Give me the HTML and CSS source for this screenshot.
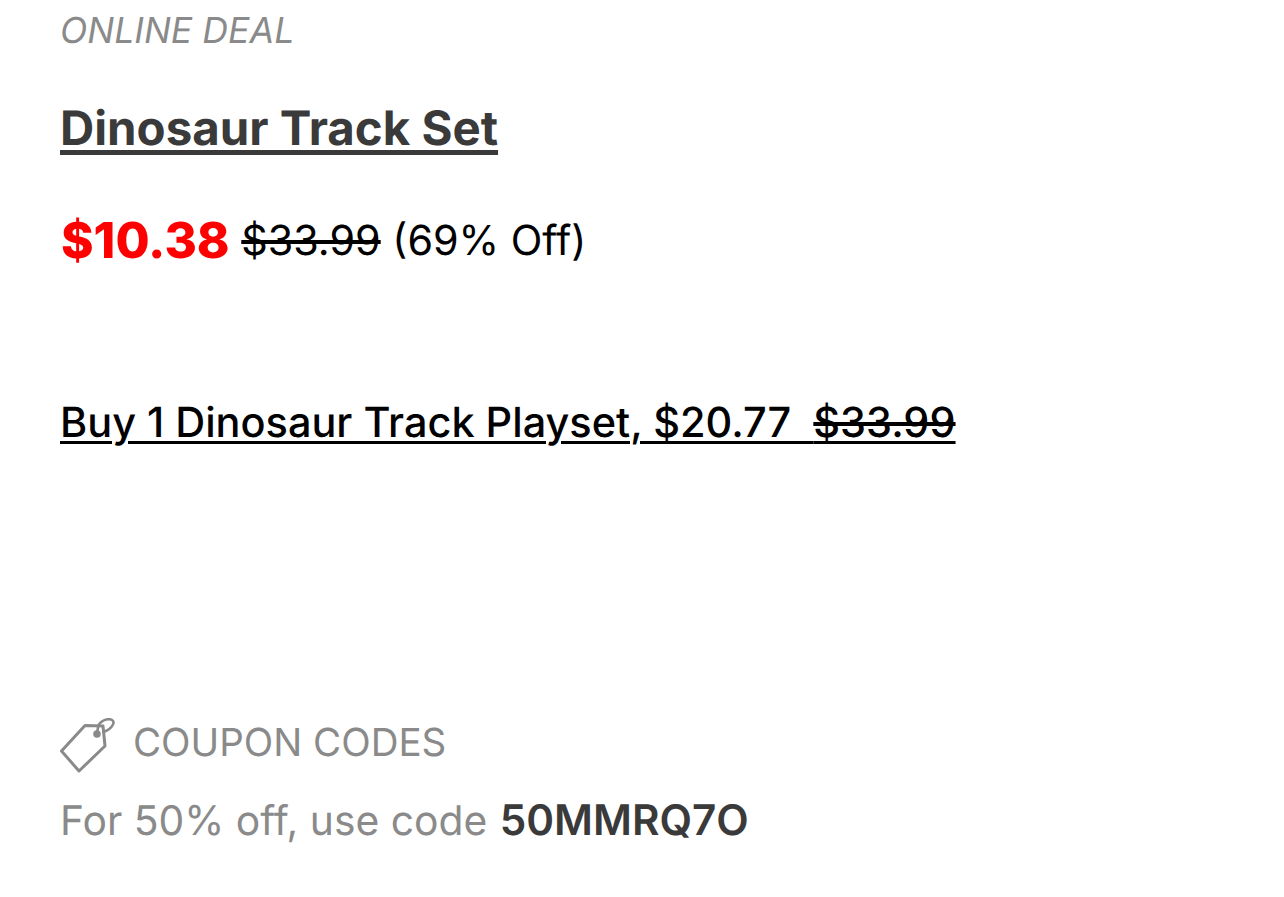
FILE: index.html
```html
<!DOCTYPE html>
<html lang="en">
<head>
<meta charset="utf-8">
<title>Dinosaur Track Set</title>
<link rel="stylesheet" href="styles.css">
</head>
<body>
<main class="deal">
  <p class="kicker">ONLINE DEAL</p>
  <h1 class="title"><a href="#">Dinosaur Track Set</a></h1>
  <p class="price"><span class="now">$10.38</span> <s class="was">$33.99</s> <span class="off">(69% Off)</span></p>
  <p class="offer"><a href="#">Buy 1 Dinosaur Track Playset, $20.77 &nbsp;<s>$33.99</s></a></p>
  <div class="coupon-head">
    <svg class="tag" width="56" height="56" viewBox="0 0 56 56" fill="none" stroke="#8a8a8a" stroke-width="3" aria-hidden="true">
      <path d="M1.5 33 L25 7.5 L43 8 L45 28 L19 53 Z" stroke-linejoin="round"/>
      <circle cx="37" cy="16" r="3.8" fill="#8a8a8a" stroke="none"/>
      <path d="M37 15 L38.5 7 C41 3.5 45 1.2 49 1.2 C52.5 1.2 54.5 3.5 53 6.5 C51.5 9.5 48 12.5 43.5 14" stroke-linecap="round" stroke-linejoin="round" stroke-width="2.6"/>
    </svg>
    <span class="coupon-label">COUPON CODES</span>
  </div>
  <p class="code">For 50% off, use code <strong>50MMRQ7O</strong></p>
</main>
</body>
</html>
```
FILE: styles.css
```css
html, body { margin: 0; padding: 0; background: #fff; }
body { font-family: Inter, "Liberation Sans", sans-serif; height: 897px; overflow: hidden; text-rendering: geometricPrecision; }
.deal { padding: 10px 60px 0; }
.kicker { margin: 0; font-size: 35.7px; line-height: 41px; font-style: italic; color: #8a8a8a; }
.title { margin: 50px 0 0; font-size: 47.4px; line-height: 56px; font-weight: 650; color: #3a3a3a; }
.title a { color: inherit; text-decoration-thickness: 5px; text-underline-offset: 5px; }
.price { margin: 59px 0 0; font-size: 41.3px; line-height: 48px; color: #000; }
.now { font-weight: 800; font-size: 49.4px; color: #ff0000; margin-left: 1px; vertical-align: -3px; }
.offer { margin: 134px 0 0; font-size: 41.45px; line-height: 48px; font-weight: 450; }
.offer a { color: #000; text-decoration-thickness: 3px; text-underline-offset: 4px; }
.coupon-head { margin-top: 272px; display: flex; align-items: center; gap: 17px; font-size: 38.5px; color: #8a8a8a; }
.coupon-label { margin-bottom: 6px; }
.code { margin: 22px 0 0; font-size: 40.8px; line-height: 48px; color: #8a8a8a; }
.code strong { color: #3a3a3a; font-weight: 600; font-size: 42.2px; margin-left: 1px; }
```
